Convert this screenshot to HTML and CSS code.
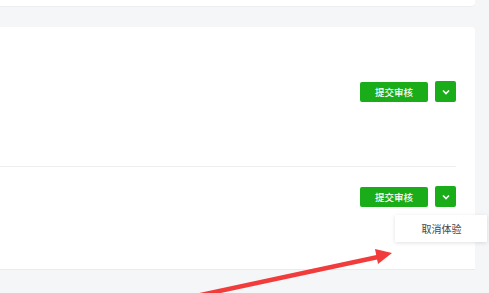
FILE: index.html
```html
<!DOCTYPE html>
<html lang="zh-CN">
<head>
    <meta charset="UTF-8">
    <meta name="viewport" content="width=device-width, initial-scale=1.0">
    <title>版本管理</title>
    <link rel="stylesheet" href="styles.css">
</head>
<body>
    <div class="top-card"></div>
    <div class="card">
        <div class="row row-first">
            <div class="actions">
                <button class="btn-submit">提交审核</button>
                <button class="btn-more">
                    <svg width="8" height="6" viewBox="0 0 8 6"><path d="M1 1.5 L4 4.5 L7 1.5" fill="none" stroke="#fff" stroke-width="1.6"/></svg>
                </button>
            </div>
        </div>
        <div class="row row-second">
            <div class="actions">
                <button class="btn-submit">提交审核</button>
                <div class="more-wrap">
                    <button class="btn-more">
                        <svg width="8" height="6" viewBox="0 0 8 6"><path d="M1 1.5 L4 4.5 L7 1.5" fill="none" stroke="#fff" stroke-width="1.6"/></svg>
                    </button>
                    <div class="menu">取消体验</div>
                </div>
            </div>
        </div>
    </div>

    <!-- 标注箭头 -->
    <svg class="arrow" width="489" height="293" viewBox="0 0 489 293">
        <line x1="196" y1="296" x2="378" y2="257" stroke="#f23b3b" stroke-width="4.5" stroke-linecap="round"/>
        <polygon points="392,253 375,249 378,264" fill="#f23b3b"/>
    </svg>
</body>
</html>
```

FILE: styles.css
```css
body {
    margin: 0;
    padding: 0;
    background: #f5f6f8;
    font-family: "Noto Sans CJK SC", "Liberation Sans", sans-serif;
    height: 293px;
    overflow: hidden;
    position: relative;
}
.top-card {
    width: 475px;
    height: 6px;
    background: #fff;
    border-radius: 0 0 4px 0;
    border-bottom: 1px solid #eceef1;
}
.card {
    margin-top: 20px;
    width: 475px;
    height: 243px;
    background: #fff;
    border-radius: 0 4px 0 0;
    border-bottom: 1px solid #e2eef4;
    padding-right: 19px;
    box-sizing: border-box;
}
.row {
    display: flex;
    justify-content: flex-end;
    box-sizing: border-box;
}
.row-first {
    height: 140px;
    padding-top: 55px;
    border-bottom: 1px solid #eeeff1;
}
.row-second {
    padding-top: 20px;
}
.actions {
    display: flex;
    gap: 7px;
    align-items: flex-start;
}
.btn-submit {
    width: 68px;
    height: 20px;
    border: none;
    border-radius: 2px;
    background: #1aad19;
    color: #fff;
    font-family: inherit;
    font-size: 9.5px;
    font-weight: 500;
    padding: 0;
    line-height: 20px;
}
.btn-more {
    width: 21px;
    height: 21px;
    margin-top: -1px;
    border: none;
    border-radius: 2px;
    background: #1aad19;
    padding: 0;
    display: flex;
    align-items: center;
    justify-content: center;
}
.more-wrap {
    position: relative;
}
.menu {
    position: absolute;
    left: -40px;
    top: 28px;
    width: 92px;
    height: 27px;
    background: #fff;
    box-shadow: 0 1px 4px rgba(0, 0, 0, 0.12);
    color: #444;
    font-size: 10px;
    line-height: 27px;
    text-align: center;
    box-sizing: border-box;
    padding-left: 1px;
}
.arrow {
    position: absolute;
    left: 0;
    top: 0;
    pointer-events: none;
}
```
